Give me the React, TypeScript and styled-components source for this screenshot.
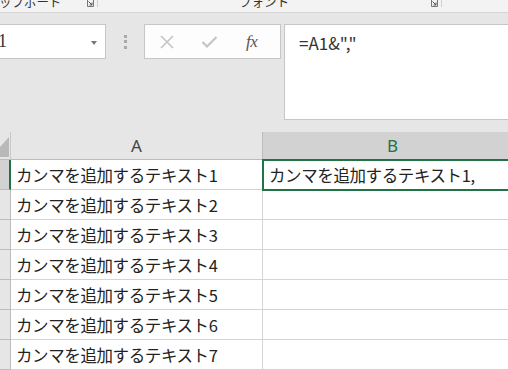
import React from "react";
import styled, { createGlobalStyle } from "styled-components";

const Global = createGlobalStyle`
  html, body { margin: 0; padding: 0; overflow: hidden; background: #e6e6e6; }
  body { width: 508px; height: 370px; font-family: "Noto Sans CJK JP", "Noto Sans", sans-serif; }
`;

const Page = styled.div`
  width: 508px;
  height: 370px;
  overflow: hidden;
  display: flex;
  flex-direction: column;
  background: #e6e6e6;
`;

const Ribbon = styled.div`
  height: 12px;
  flex: none;
  display: flex;
  background: #f3f3f3;
  border-bottom: 1px solid #d5d5d5;
  overflow: hidden;
`;

const Group = styled.div<{ $w: number; $justify: string }>`
  width: ${(p) => p.$w}px;
  flex: none;
  display: flex;
  justify-content: ${(p) => p.$justify};
  align-items: flex-end;
  position: relative;
  border-right: 1px solid #d0d0d0;
  height: 7px;
  box-sizing: border-box;
`;

const GroupLabel = styled.span<{ $shift: number }>`
  font-size: 12.5px;
  line-height: 12px;
  color: #333;
  white-space: nowrap;
  margin-left: ${(p) => p.$shift}px;
  margin-bottom: -1px;
`;

const Launcher = styled.svg`
  position: absolute;
  right: 3px;
  top: 0;
`;

const FormulaArea = styled.div`
  flex: none;
  height: 119px;
  display: flex;
  align-items: flex-start;
  padding-top: 11px;
  box-sizing: border-box;
`;

const NameBox = styled.div`
  flex: none;
  margin-left: -22px;
  width: 128px;
  height: 35px;
  box-sizing: border-box;
  background: #fff;
  border: 1px solid #c6c6c6;
  display: flex;
  align-items: center;
  padding-left: 6px;
  position: relative;
  font-family: "Liberation Serif", serif;
  font-size: 18px;
  color: #333;
`;

const DropArrow = styled.div`
  position: absolute;
  right: 8px;
  top: 16px;
  width: 0;
  height: 0;
  border-left: 3.5px solid transparent;
  border-right: 3.5px solid transparent;
  border-top: 4px solid #777;
`;

const Dots = styled.div`
  flex: none;
  width: 38px;
  height: 35px;
  display: flex;
  flex-direction: column;
  align-items: center;
  justify-content: center;
  gap: 2.5px;
  & > span {
    width: 3px;
    height: 3px;
    background: #a9a9a9;
  }
`;

const ButtonBox = styled.div`
  flex: none;
  width: 137px;
  height: 35px;
  box-sizing: border-box;
  background: #fdfdfd;
  border: 1px solid #c6c6c6;
  display: flex;
  align-items: center;
  padding-left: 14px;
  gap: 26px;
`;

const FxLabel = styled.span`
  font-family: "Liberation Serif", serif;
  font-style: italic;
  font-size: 17px;
  color: #555;
  margin-left: 2px;
  letter-spacing: -0.5px;
`;

const FormulaBox = styled.div`
  flex: 1;
  margin-left: 3px;
  margin-right: -10px;
  height: 96px;
  box-sizing: border-box;
  background: #fff;
  border: 1px solid #c6c6c6;
  padding: 6px 0 0 14px;
  font-size: 17px;
  line-height: 24px;
  color: #333;
`;

const Grid = styled.div`
  display: grid;
  grid-template-columns: 11px 252px 260px;
  grid-template-rows: 28px repeat(7, 30px);
  width: 523px;
  background: #fff;
`;

const Corner = styled.div`
  background: #e6e6e6;
  border-right: 1px solid #c8c8c8;
  border-bottom: 1px solid #bcbcbc;
  box-sizing: border-box;
  position: relative;
  overflow: hidden;
`;

const CornerTri = styled.div`
  position: absolute;
  right: 1px;
  bottom: 2px;
  width: 0;
  height: 0;
  border-left: 18px solid transparent;
  border-bottom: 20px solid #b9b9b9;
`;

const ColHead = styled.div<{ $sel?: boolean }>`
  background: ${(p) => (p.$sel ? "#d2d2d2" : "#e6e6e6")};
  color: ${(p) => (p.$sel ? "#217346" : "#444")};
  border-right: 1px solid #bcbcbc;
  border-bottom: 1px solid #bcbcbc;
  box-sizing: border-box;
  display: flex;
  align-items: center;
  justify-content: center;
  font-family: "Noto Sans", sans-serif;
  font-size: 17px;
`;

const RowHead = styled.div<{ $sel?: boolean }>`
  background: ${(p) => (p.$sel ? "#d2d2d2" : "#e6e6e6")};
  border-right: ${(p) => (p.$sel ? "2px solid #217346" : "1px solid #bcbcbc")};
  border-bottom: 1px solid #bcbcbc;
  box-sizing: border-box;
`;

const Cell = styled.div<{ $sel?: boolean }>`
  border-right: 1px solid #d4d4d4;
  border-bottom: 1px solid #d4d4d4;
  box-sizing: border-box;
  display: flex;
  align-items: center;
  padding-left: 5px;
  font-size: 16.5px;
  letter-spacing: -0.4px;
  color: #222;
  white-space: nowrap;
  overflow: visible;
  position: relative;
  ${(p) =>
    p.$sel
      ? `outline: 2px solid #217346; outline-offset: -1px; z-index: 1; padding-left: 6px;`
      : ""}
`;

const rows = [1, 2, 3, 4, 5, 6, 7];

export default function App() {
  return (
    <Page>
      <Global />
      <Ribbon>
        <Group $w={98} $justify="flex-start">
          <GroupLabel $shift={-26}>クリップボード</GroupLabel>
          <Launcher width="7" height="7" viewBox="0 0 7 7">
            <path d="M0.5 0 V6.5 H6.5 V0" fill="none" stroke="#777" strokeWidth="1" />
            <path d="M1.5 1.5 L5 5 M5 2.5 V5 H2.5" fill="none" stroke="#555" strokeWidth="1" />
          </Launcher>
        </Group>
        <Group $w={344} $justify="flex-start">
          <GroupLabel $shift={141}>フォント</GroupLabel>
          <Launcher width="7" height="7" viewBox="0 0 7 7">
            <path d="M0.5 0 V6.5 H6.5 V0" fill="none" stroke="#777" strokeWidth="1" />
            <path d="M1.5 1.5 L5 5 M5 2.5 V5 H2.5" fill="none" stroke="#555" strokeWidth="1" />
          </Launcher>
        </Group>
      </Ribbon>
      <FormulaArea>
        <NameBox>
          A1
          <DropArrow />
        </NameBox>
        <Dots>
          <span />
          <span />
          <span />
        </Dots>
        <ButtonBox>
          <svg width="16" height="16" viewBox="0 0 16 16">
            <path d="M2 2 L14 14 M14 2 L2 14" stroke="#c4c4c4" strokeWidth="1.6" fill="none" />
          </svg>
          <svg width="17" height="14" viewBox="0 0 17 14">
            <path d="M1.5 7 L6 11.5 L15.5 2" stroke="#c4c4c4" strokeWidth="2.2" fill="none" />
          </svg>
          <FxLabel>fx</FxLabel>
        </ButtonBox>
        <FormulaBox>=A1&amp;","</FormulaBox>
      </FormulaArea>
      <Grid>
        <Corner>
          <CornerTri />
        </Corner>
        <ColHead>A</ColHead>
        <ColHead $sel>B</ColHead>
        {rows.map((r) => (
          <React.Fragment key={r}>
            <RowHead $sel={r === 1} />
            <Cell>カンマを追加するテキスト{r}</Cell>
            <Cell $sel={r === 1}>{r === 1 ? "カンマを追加するテキスト1," : ""}</Cell>
          </React.Fragment>
        ))}
      </Grid>
    </Page>
  );
}
